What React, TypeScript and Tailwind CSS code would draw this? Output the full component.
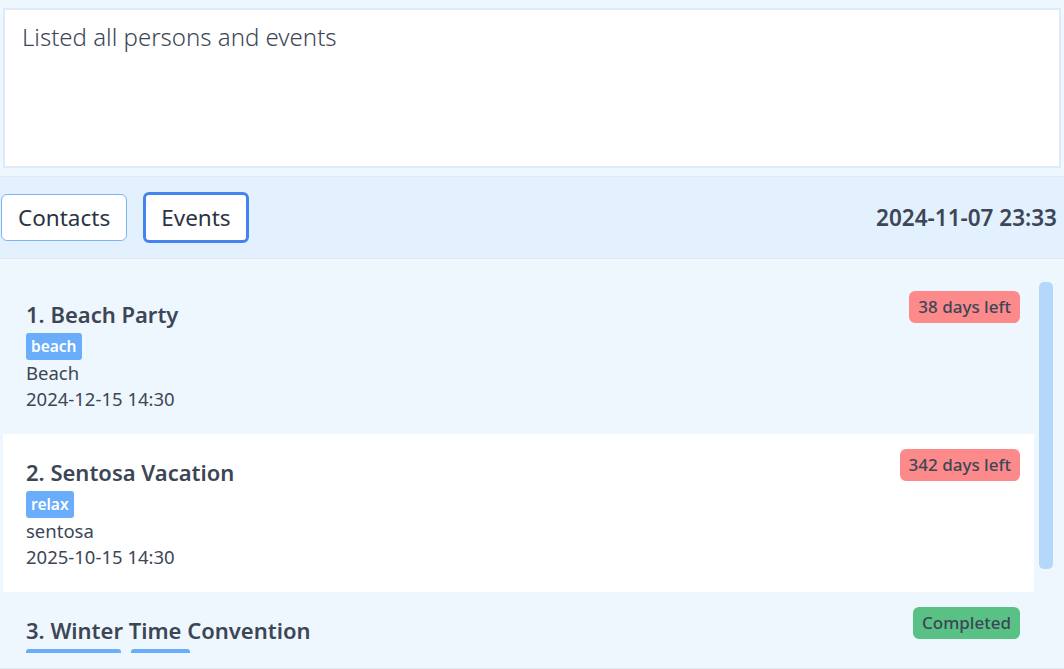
import React from "react";

type EventItem = {
	name: string;
	tags: string[];
	location: string;
	date: string;
	status: string;
	done?: boolean;
};

const events: EventItem[] = [
	{ name: "Beach Party", tags: ["beach"], location: "Beach", date: "2024-12-15 14:30", status: "38 days left" },
	{ name: "Sentosa Vacation", tags: ["relax"], location: "sentosa", date: "2025-10-15 14:30", status: "342 days left" },
	{ name: "Winter Time Convention", tags: ["convention", "winter"], location: "Hall", date: "2024-01-10 09:00", status: "Completed", done: true },
];

const EventCard: React.FC<{ item: EventItem; index: number }> = ({ item, index }) => {
	const odd = index % 2 === 1;
	return (
		<div className={`relative h-[158px] shrink-0 pl-[23px] pt-[23px] ${odd ? "bg-white" : "bg-[#eff7fe]"}`}>
			<div className="text-[22px] font-semibold leading-[31px] text-[#3c4656]">
				{index + 1}. {item.name}
			</div>
			<div className="mt-[3px] flex gap-[10px]">
				{item.tags.map((t) => (
					<span
						key={t}
						className="rounded-[3px] bg-[#69adfb] px-[5px] text-[15.5px] font-semibold leading-[27px] text-white"
					>
						{t}
					</span>
				))}
			</div>
			<div className="text-[18.5px] leading-[26px] text-[#3c4656]">{item.location}</div>
			<div className="text-[18.5px] leading-[26px] text-[#3c4656]">{item.date}</div>
			<span
				className={`absolute right-[14px] top-[15px] rounded-[6px] px-[9px] text-[17px] font-medium leading-[32px] text-[#3c4656] ${
					item.done ? "bg-[#5ac185]" : "bg-[#fd8a8a]"
				}`}
			>
				{item.status}
			</span>
		</div>
	);
};

export default function App() {
	return (
		<div
			className="flex h-[669px] w-[1064px] flex-col overflow-hidden bg-[#eff7fe]"
			style={{ fontFamily: '"Noto Sans", "Open Sans", sans-serif' }}
		>
			{/* Result box */}
			<div className="h-[177px] shrink-0 border-b border-[#e1e9f1] px-[3px] pt-[8px]">
				<div className="h-[160px] border-2 border-[#dfeaf6] bg-white px-[17px] pt-[9px] text-[24px] font-light text-[#3c4656]">
					Listed all persons and events
				</div>
			</div>

			{/* Toolbar */}
			<div className="flex h-[82px] shrink-0 items-center justify-between border-b border-[#dfe7ef] bg-[#e3f0fd] pl-[1px] pr-[7px]">
				<div className="flex items-center gap-[16px]">
					<button className="h-[47px] rounded-[6px] border border-[#7db3f3] bg-white px-[16px] text-[22.5px] text-[#2c3444]">
						Contacts
					</button>
					<button className="h-[51px] rounded-[6px] border-[3px] border-[#4584ef] bg-white px-[15px] text-[22.5px] text-[#2c3444]">
						Events
					</button>
				</div>
				<div className="text-[22.5px] font-semibold text-[#3c4656]">2024-11-07 23:33</div>
			</div>

			{/* Event list */}
			<div className="flex h-[394px] shrink-0 gap-[5px] overflow-hidden pl-[3px] pr-[11px] pt-[17px]">
				<div className="flex min-w-0 flex-1 flex-col overflow-hidden">
					{events.map((e, i) => (
						<EventCard key={e.name} item={e} index={i} />
					))}
				</div>
				<div className="w-[14px] shrink-0 pt-[6px]">
					<div className="h-[287px] rounded-[5px] bg-[#b3d8fc]" />
				</div>
			</div>
			<div className="flex-1 border-b border-[#e1e9f1]" />
		</div>
	);
}
